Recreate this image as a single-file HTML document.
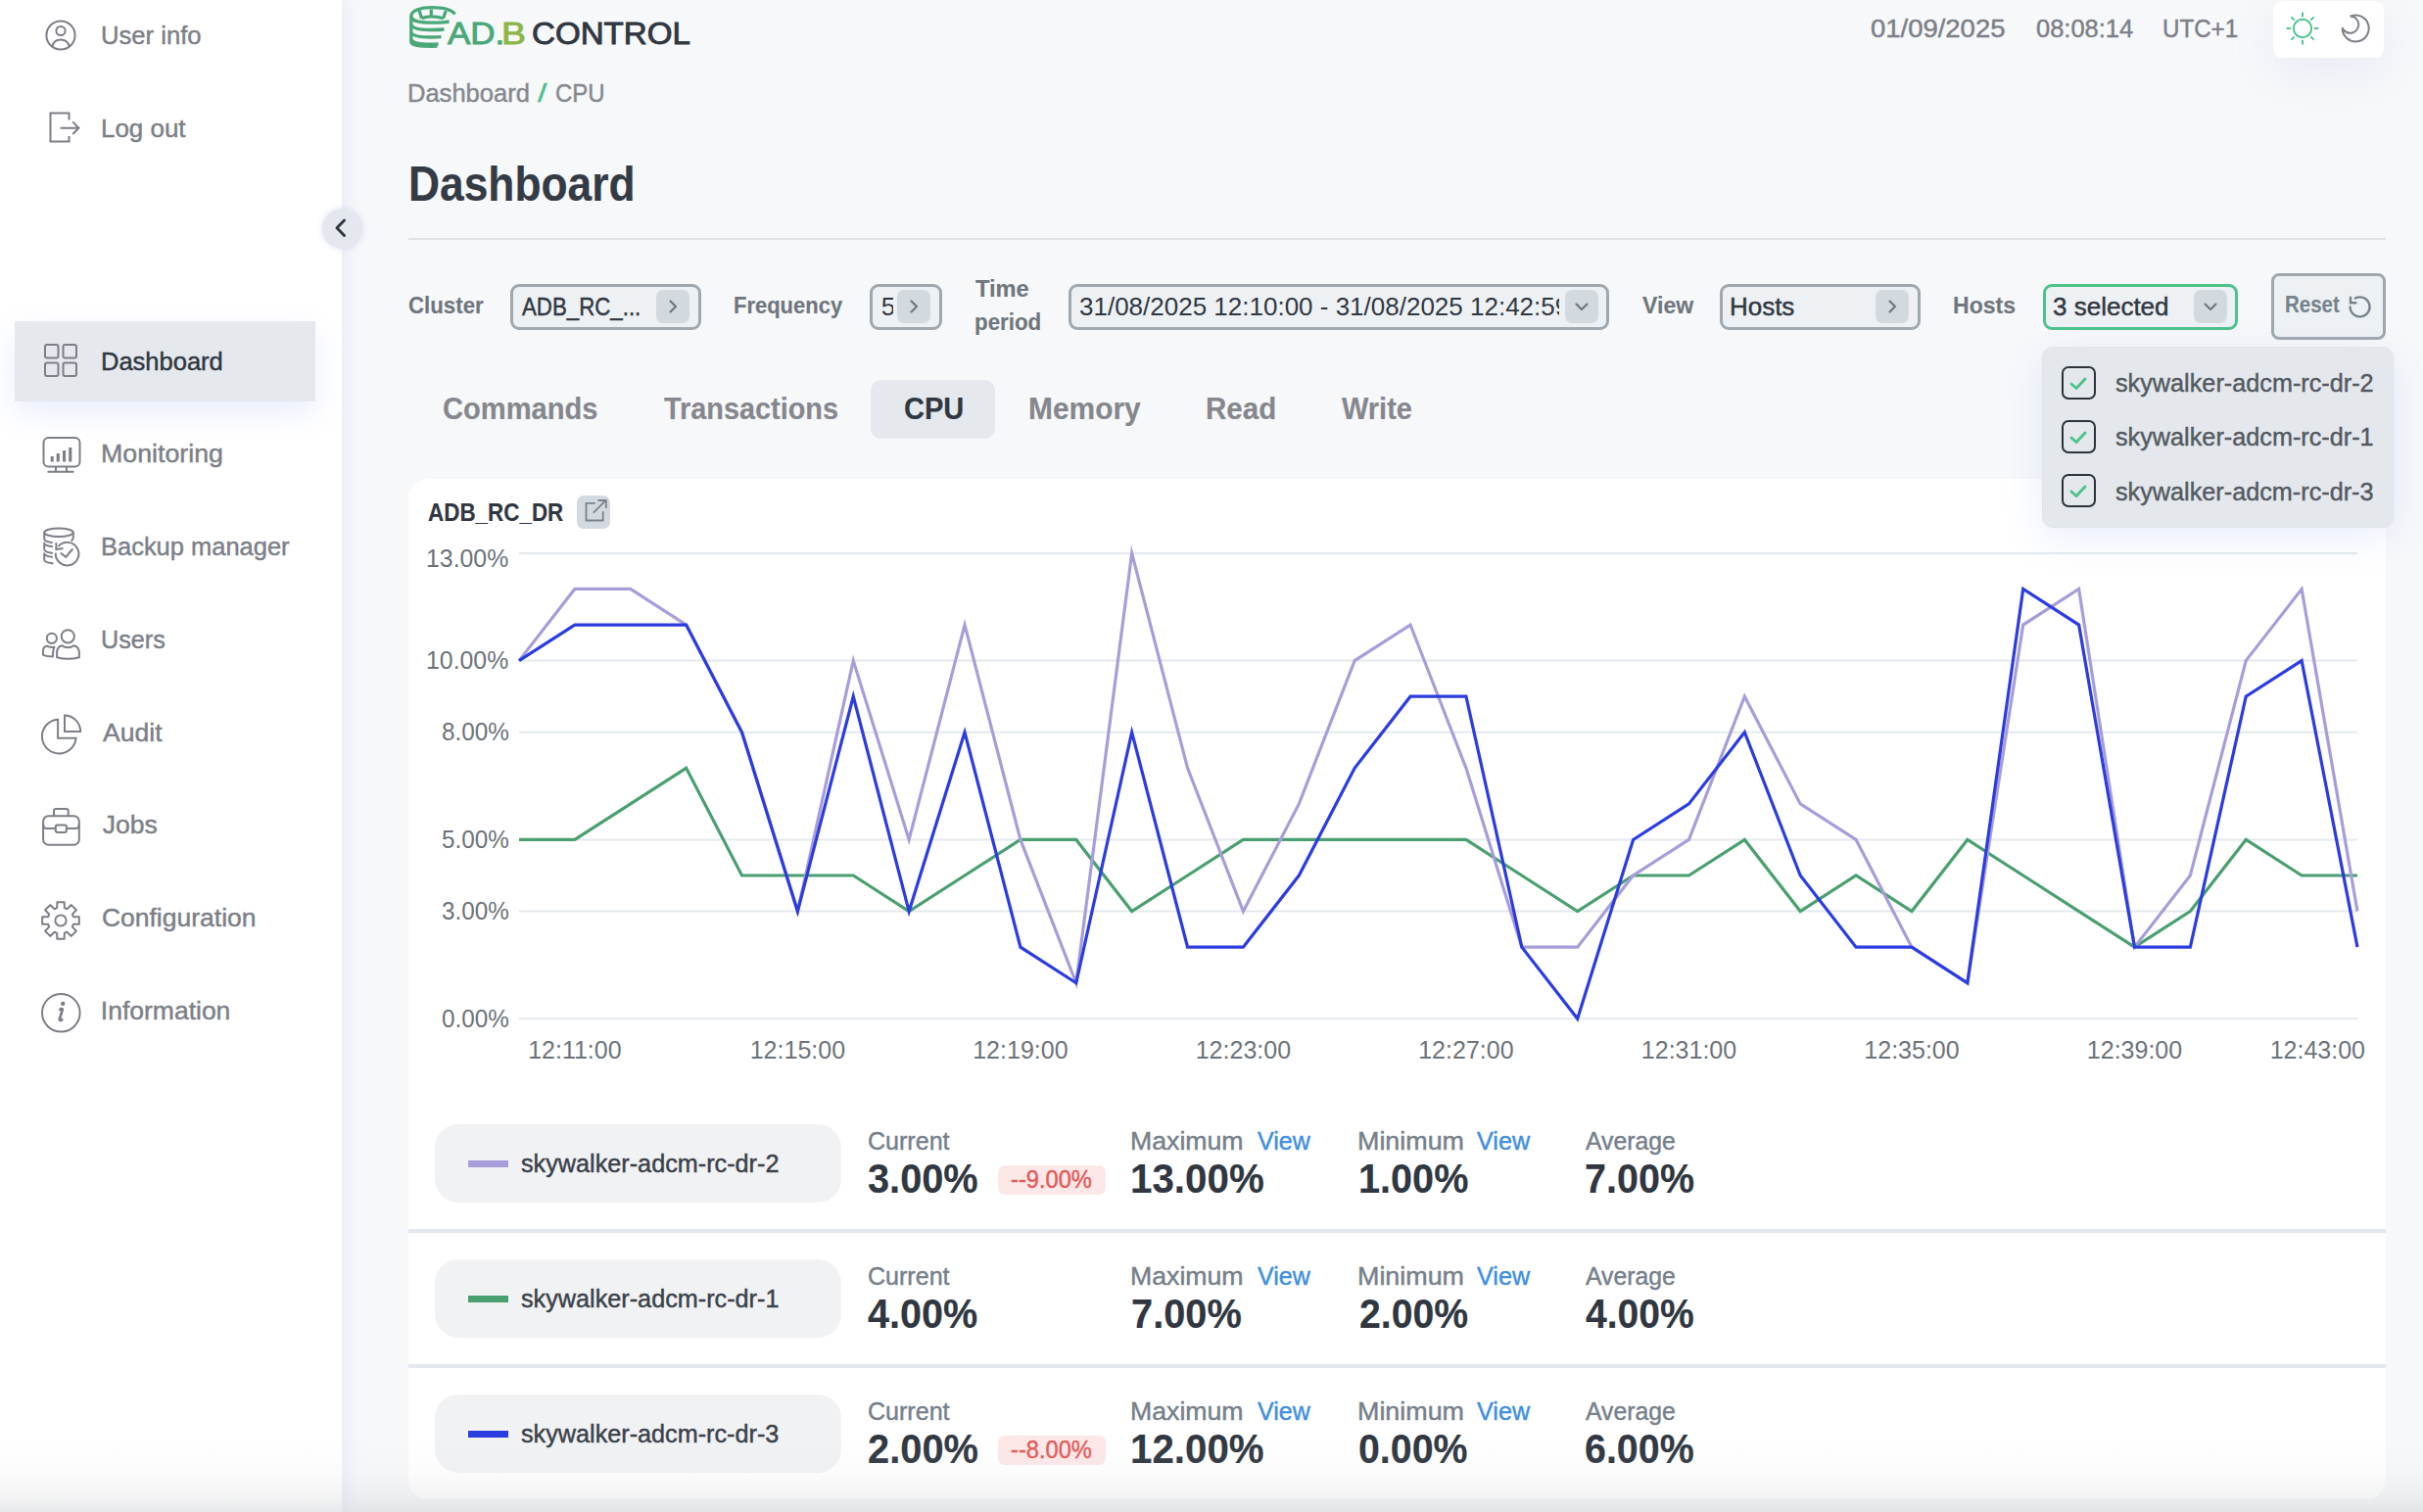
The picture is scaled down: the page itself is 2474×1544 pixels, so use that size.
<!DOCTYPE html>
<html><head><meta charset="utf-8"><title>ADB Control - Dashboard</title>
<style>
html,body{margin:0;padding:0;}
body{width:2474px;height:1544px;overflow:hidden;position:relative;background:#f7f8fa;font-family:"Liberation Sans", sans-serif;}
.t{position:absolute;line-height:1;white-space:nowrap;font-family:"Liberation Sans", sans-serif;}
.r{position:absolute;}
</style></head><body>
<div class="r" style="left:0.0px;top:0.0px;width:349.0px;height:1544.0px;background:#ffffff;box-shadow:4px 0 18px rgba(90,140,210,0.10);"></div>
<div class="r" style="left:15.0px;top:328.0px;width:307.0px;height:81.5px;background:#e5e9ee;box-shadow:0 12px 30px rgba(120,150,230,0.16);"></div>
<div class="t " style="left:103.3px;top:22.5px;font-size:26.5px;color:#7c7f87;font-weight:400;transform:scaleX(0.9679);transform-origin:0 0;-webkit-text-stroke:0.45px #7c7f87;">User info</div>
<div class="t " style="left:103.0px;top:117.6px;font-size:26.5px;color:#7c7f87;font-weight:400;transform:scaleX(0.9791);transform-origin:0 0;-webkit-text-stroke:0.45px #7c7f87;">Log out</div>
<div class="t " style="left:103.1px;top:356.2px;font-size:26.5px;color:#303741;font-weight:400;transform:scaleX(0.9626);transform-origin:0 0;-webkit-text-stroke:0.45px #303741;">Dashboard</div>
<div class="t " style="left:103.0px;top:450.4px;font-size:26.5px;color:#7c7f87;font-weight:400;transform:scaleX(1.0100);transform-origin:0 0;-webkit-text-stroke:0.45px #7c7f87;">Monitoring</div>
<div class="t " style="left:103.1px;top:545.1px;font-size:26.5px;color:#7c7f87;font-weight:400;transform:scaleX(0.9611);transform-origin:0 0;-webkit-text-stroke:0.45px #7c7f87;">Backup manager</div>
<div class="t " style="left:103.3px;top:639.9px;font-size:26.5px;color:#7c7f87;font-weight:400;transform:scaleX(0.9502);transform-origin:0 0;-webkit-text-stroke:0.45px #7c7f87;">Users</div>
<div class="t " style="left:105.1px;top:734.6px;font-size:26.5px;color:#7c7f87;font-weight:400;-webkit-text-stroke:0.45px #7c7f87;">Audit</div>
<div class="t " style="left:104.8px;top:829.3px;font-size:26.5px;color:#7c7f87;font-weight:400;-webkit-text-stroke:0.45px #7c7f87;">Jobs</div>
<div class="t " style="left:103.9px;top:924.0px;font-size:26.5px;color:#7c7f87;font-weight:400;-webkit-text-stroke:0.45px #7c7f87;">Configuration</div>
<div class="t " style="left:102.8px;top:1018.7px;font-size:26.5px;color:#7c7f87;font-weight:400;-webkit-text-stroke:0.45px #7c7f87;">Information</div>
<svg class="r" style="left:46px;top:20px;" width="32" height="32" viewBox="0 0 32 32"><g fill="none" stroke="#7c7f87" stroke-width="2"><circle cx="16" cy="16" r="14.6"/><circle cx="16" cy="11.5" r="4.6"/><path d="M7.2 27.6 C8.5 22.5 12 20.5 16 20.5 C20 20.5 23.5 22.5 24.8 27.6"/></g></svg>
<svg class="r" style="left:50px;top:114px;" width="33" height="33" viewBox="0 0 33 33"><g fill="none" stroke="#7c7f87" stroke-width="2"><path d="M20.5 8.5 V1.5 H1.5 V30.5 H20.5 V25"/><path d="M11.5 16.7 H30.5 M24.2 10.4 L30.5 16.7 L24.2 23"/></g></svg>
<svg class="r" style="left:45px;top:351px;" width="35" height="35" viewBox="0 0 35 35"><g fill="none" stroke="#7c7f87" stroke-width="2"><rect x="1" y="1" width="13.5" height="13.5" rx="2"/><rect x="19.5" y="1" width="13.5" height="13.5" rx="2"/><rect x="1" y="19.5" width="13.5" height="13.5" rx="2"/><rect x="19.5" y="19.5" width="13.5" height="13.5" rx="2"/></g></svg>
<svg class="r" style="left:43px;top:445px;" width="40" height="39" viewBox="0 0 40 39"><g fill="none" stroke="#7c7f87" stroke-width="2"><rect x="1.5" y="2" width="37" height="29.5" rx="5"/><path d="M14 31.5 V36.8 M25 31.5 V36.8 M5.5 36.8 H32.5"/></g><g fill="#7c7f87"><rect x="8.7" y="21" width="3.1" height="5.5"/><rect x="14.7" y="18" width="3.1" height="8.5"/><rect x="21" y="15" width="3.1" height="11.5"/><rect x="27.2" y="12" width="3.1" height="14.5"/></g></svg>
<svg class="r" style="left:42px;top:538px;" width="42" height="42" viewBox="0 0 42 42"><g fill="none" stroke="#7c7f87" stroke-width="2" stroke-width="1.95" stroke-linecap="round"><ellipse cx="18" cy="5.7" rx="14.8" ry="4.2"/><path d="M32.8 6 V11 C32.8 12.5 32 13.5 31.2 14"/><path d="M3.2 6 V12.3 C3.2 14 6 15.3 10.8 16"/><path d="M3.9 17.9 C5 18.8 8 19.6 11.1 20.1 M3.2 16.6 V23 C3.2 24.8 6 26 11.1 26.7"/><path d="M3.9 28.4 C5 29.3 8 30.2 11.1 30.8 M3.2 27.2 V33.5 C3.2 35.3 6 36.6 11.6 37.3"/><path d="M14.8 27.5 A11.8 11.8 0 1 0 18.2 19.3"/><path d="M15.4 16.2 V23 L22.4 22" stroke-linejoin="miter" stroke-linecap="butt"/><path d="M20.4 27 L25.2 30.9 L31.8 23"/></g></svg>
<svg class="r" style="left:42px;top:641px;" width="42" height="35" viewBox="0 0 42 35"><g fill="none" stroke="#7c7f87" stroke-width="2" stroke-width="1.9" stroke-linejoin="round"><circle cx="10.84" cy="10.86" r="5.1"/><circle cx="27.3" cy="8.8" r="6.6"/><path d="M5.6 18.7 C8 19.8 10.5 20.2 13.5 19.7 C12.2 22.5 11.9 26 11.9 29.6 C8 29.6 4.5 29 2 27.9 V23.5 C2 21 3.5 19.2 5.6 18.7 Z"/><path d="M21.3 18.3 C23 19.6 25 20.3 27.3 20.3 C29.6 20.3 31.6 19.6 33.4 18.3 C36.5 19 38.9 21.5 38.9 26 V30.2 C35.5 31.2 31.5 31.8 27.3 31.8 C23 31.8 19.5 31.2 16.1 30.2 V26 C16.1 21.5 18.2 19 21.3 18.3 Z"/></g></svg>
<svg class="r" style="left:42px;top:729px;" width="44" height="44" viewBox="0 0 44 44"><g fill="none" stroke="#7c7f87" stroke-width="2"><path d="M17.1 5.7 A17.4 17.4 0 1 0 35.6 24.8 H17.1 Z"/><path d="M24 1.5 A16.4 16.4 0 0 1 40.1 17.9 H24 Z"/></g></svg>
<svg class="r" style="left:42px;top:824px;" width="42" height="42" viewBox="0 0 42 42"><g fill="none" stroke="#7c7f87" stroke-width="2" stroke-width="1.85"><rect x="2.1" y="9.2" width="36.7" height="29.5" rx="5.5"/><path d="M13 9.2 V4 Q13 1.95 15 1.95 H25.7 Q27.7 1.95 27.7 4 V9.2"/><path d="M2.1 17.5 C2.1 20.5 3.5 22.1 6 22.1 H14.8 M25.9 22.1 H34.9 C37.4 22.1 38.8 20.5 38.8 17.5"/><rect x="14.8" y="18.5" width="11.1" height="7.4" rx="1.8"/></g></svg>
<svg class="r" style="left:41px;top:919px;" width="42" height="42" viewBox="0 0 42 42"><g fill="none" stroke="#7c7f87" stroke-width="2" stroke-width="1.9"><path d="M17.37 2.15 L24.63 2.15 L24.83 8.16 L27.37 9.21 L31.77 5.10 L36.90 10.23 L32.79 14.63 L33.84 17.17 L39.85 17.37 L39.85 24.63 L33.84 24.83 L32.79 27.37 L36.90 31.77 L31.77 36.90 L27.37 32.79 L24.83 33.84 L24.63 39.85 L17.37 39.85 L17.17 33.84 L14.63 32.79 L10.23 36.90 L5.10 31.77 L9.21 27.37 L8.16 24.83 L2.15 24.63 L2.15 17.37 L8.16 17.17 L9.21 14.63 L5.10 10.23 L10.23 5.10 L14.63 9.21 L17.17 8.16 Z" stroke-linejoin="round"/><circle cx="21" cy="21" r="5.6"/></g></svg>
<svg class="r" style="left:41px;top:1014px;" width="42" height="42" viewBox="0 0 42 42"><g fill="none" stroke="#7c7f87" stroke-width="2" stroke-width="1.75"><circle cx="21.3" cy="20.3" r="19.3"/></g><circle cx="23.2" cy="10.9" r="2.2" fill="#7c7f87"/><path d="M20.3 17 C21.3 16 23 15.6 22.8 17.2 L19.8 26.6 C19.4 28.2 20.6 28.6 22.2 27.2" fill="none" stroke="#7c7f87" stroke-width="2.7" stroke-linecap="round" stroke-linejoin="round"/></svg>
<div class="r" style="left:329.0px;top:213.0px;width:41.0px;height:41.0px;border-radius:50%;background:#e4e8ee;box-shadow:0 0 6px rgba(130,140,220,0.25);"></div>
<svg class="r" style="left:338px;top:222px;" width="22" height="22" viewBox="0 0 22 22"><path d="M13.5 3 L6 10.8 L13.5 18.5" fill="none" stroke="#303741" stroke-width="3" stroke-linecap="round" stroke-linejoin="round"/></svg>
<svg class="r" style="left:417px;top:5px;" width="50" height="45" viewBox="0 0 50 45"><g fill="none" stroke="#4aa878" stroke-width="3.3" stroke-linecap="butt" stroke-linejoin="round"><path d="M47.5 9.5 C44 4.5 35 2.7 24 2.7 C12 2.7 2.8 6 2.8 11.5 V38 C2.8 41 10 42.6 29.5 42.2"/><path d="M2.8 12 C4 17 12 18.2 24 18.2 C32 18.2 38 17.8 41.6 16.8"/><path d="M2.8 20 C4 24 12 25.5 22 25.5 C29 25.5 33 25.3 36.5 25"/><path d="M2.8 28 C4 31.5 12 33 22 33 C27 33 31 32.8 33.5 32.6"/><path d="M2.8 35 C4 38.5 12 40.2 22 40.2 C26 40.2 28.5 40.1 30.5 40"/><path d="M10.9 5.2 L13.6 13.8 M23.3 4.5 V12 M38.2 6 L35.6 13.8 M13.6 13.8 C17 12.3 20 11.9 23.3 11.9 C27 11.9 32 12.5 35.6 13.8"/></g></svg>
<div class="t " style="left:456.9px;top:18.6px;font-size:31px;color:#4aa878;font-weight:400;transform:scaleX(1.1270);transform-origin:0 0;-webkit-text-stroke:0.9px #4aa878;">AD.</div>
<div class="t " style="left:512.0px;top:18.6px;font-size:31px;color:#8db547;font-weight:400;transform:scaleX(1.2048);transform-origin:0 0;-webkit-text-stroke:0.9px #8db547;">B</div>
<div class="t " style="left:543.3px;top:18.6px;font-size:31px;color:#303741;font-weight:400;transform:scaleX(1.0678);transform-origin:0 0;-webkit-text-stroke:0.9px #303741;">CONTROL</div>
<div class="t " style="left:1909.6px;top:16.1px;font-size:26px;color:#7c7f87;font-weight:400;transform:scaleX(1.0562);transform-origin:0 0;-webkit-text-stroke:0.45px #7c7f87;">01/09/2025</div>
<div class="t " style="left:2079.4px;top:16.1px;font-size:26px;color:#7c7f87;font-weight:400;transform:scaleX(0.9789);transform-origin:0 0;-webkit-text-stroke:0.45px #7c7f87;">08:08:14</div>
<div class="t " style="left:2208.1px;top:16.1px;font-size:26px;color:#7c7f87;font-weight:400;transform:scaleX(0.9273);transform-origin:0 0;-webkit-text-stroke:0.45px #7c7f87;">UTC+1</div>
<div class="r" style="left:2321.0px;top:0.5px;width:113.0px;height:58.3px;background:#ffffff;border-radius:9px;box-shadow:0 14px 50px rgba(140,165,220,0.16);"></div>
<svg class="r" style="left:2331px;top:9px;" width="40" height="40" viewBox="0 0 40 40"><g stroke="#4cc38a" stroke-width="1.9" fill="none"><circle cx="20" cy="20" r="9.2"/><path d="M31.80 20.00 L36.40 20.00"/><path d="M28.34 28.34 L31.60 31.60"/><path d="M20.00 31.80 L20.00 36.40"/><path d="M11.66 28.34 L8.40 31.60"/><path d="M8.20 20.00 L3.60 20.00"/><path d="M11.66 11.66 L8.40 8.40"/><path d="M20.00 8.20 L20.00 3.60"/><path d="M28.34 11.66 L31.60 8.40"/></g></svg>
<svg class="r" style="left:2384px;top:9px;" width="40" height="40" viewBox="0 0 40 40"><path d="M16.2 7.4 A13.5 13.5 0 1 1 7.7 19.8 A8.7 8.7 0 1 0 16.2 7.4 Z" fill="none" stroke="#7c7f87" stroke-width="2" stroke-linejoin="round"/></svg>
<div class="t " style="left:416.1px;top:82.2px;font-size:26px;color:#85888f;font-weight:400;transform:scaleX(0.9814);transform-origin:0 0;-webkit-text-stroke:0.45px #85888f;">Dashboard</div>
<div class="t " style="left:548.5px;top:82.2px;font-size:26px;color:#4cc38a;font-weight:400;transform:scaleX(1.3000);transform-origin:0 0;-webkit-text-stroke:0.45px #4cc38a;">/</div>
<div class="t " style="left:567.3px;top:82.2px;font-size:26px;color:#85888f;font-weight:400;transform:scaleX(0.9205);transform-origin:0 0;-webkit-text-stroke:0.45px #85888f;">CPU</div>
<div class="t " style="left:416.7px;top:163.1px;font-size:50px;color:#343b45;font-weight:700;transform:scaleX(0.8869);transform-origin:0 0;-webkit-text-stroke:0.15px #343b45;">Dashboard</div>
<div class="r" style="left:417.0px;top:243.0px;width:2019.0px;height:2.0px;background:#dfe2e6;"></div>
<div class="t " style="left:416.6px;top:300.4px;font-size:24px;color:#6f767d;font-weight:700;transform:scaleX(0.9275);transform-origin:0 0;-webkit-text-stroke:0.15px #6f767d;">Cluster</div>
<div class="r" style="left:521.0px;top:290.0px;width:195.0px;height:47.0px;background:#eef1f4;border:3px solid #9ea8ae;border-radius:9px;box-sizing:border-box;"></div>
<div class="t " style="left:532.5px;top:300.4px;font-size:26px;color:#303741;font-weight:400;transform:scaleX(0.8563);transform-origin:0 0;-webkit-text-stroke:0.45px #303741;">ADB_RC_...</div>
<div class="r" style="left:670.0px;top:296.0px;width:34.0px;height:34.0px;background:#d3dadf;border-radius:7px;"></div>
<svg class="r" style="left:670px;top:296px;" width="34" height="34" viewBox="0 0 34 34"><path d="M14.5 11.5 L20 17 L14.5 22.5" fill="none" stroke="#6f767d" stroke-width="2.2" stroke-linecap="round" stroke-linejoin="round"/></svg>
<div class="t " style="left:748.5px;top:300.4px;font-size:24px;color:#6f767d;font-weight:700;transform:scaleX(0.9156);transform-origin:0 0;-webkit-text-stroke:0.15px #6f767d;">Frequency</div>
<div class="r" style="left:888.0px;top:290.0px;width:74.0px;height:47.0px;background:#eef1f4;border:3px solid #9ea8ae;border-radius:9px;box-sizing:border-box;"></div>
<div class="r" style="left:899.8px;top:295px;width:12.200000000000045px;height:40px;overflow:hidden;"><div class="t" style="left:0;top:5.4px;font-size:26px;color:#303741;">5</div></div>
<div class="r" style="left:916.0px;top:296.0px;width:34.0px;height:34.0px;background:#d3dadf;border-radius:7px;"></div>
<svg class="r" style="left:916px;top:296px;" width="34" height="34" viewBox="0 0 34 34"><path d="M14.5 11.5 L20 17 L14.5 22.5" fill="none" stroke="#6f767d" stroke-width="2.2" stroke-linecap="round" stroke-linejoin="round"/></svg>
<div class="t " style="left:995.5px;top:282.6px;font-size:24px;color:#6f767d;font-weight:700;transform:scaleX(0.9835);transform-origin:0 0;-webkit-text-stroke:0.15px #6f767d;">Time</div>
<div class="t " style="left:995.2px;top:316.7px;font-size:24px;color:#6f767d;font-weight:700;transform:scaleX(0.9302);transform-origin:0 0;-webkit-text-stroke:0.15px #6f767d;">period</div>
<div class="r" style="left:1091.0px;top:290.0px;width:552.0px;height:47.0px;background:#eef1f4;border:3px solid #9ea8ae;border-radius:9px;box-sizing:border-box;"></div>
<div class="r" style="left:1102px;top:295px;width:490px;height:40px;overflow:hidden;"><div class="t" style="left:0;top:5.4px;font-size:26px;color:#303741;">31/08/2025 12:10:00 - 31/08/2025 12:42:59</div></div>
<div class="r" style="left:1598.0px;top:296.0px;width:34.0px;height:34.0px;background:#d3dadf;border-radius:7px;"></div>
<svg class="r" style="left:1598px;top:296px;" width="34" height="34" viewBox="0 0 34 34"><path d="M11.5 14.5 L17 20 L22.5 14.5" fill="none" stroke="#6f767d" stroke-width="2.2" stroke-linecap="round" stroke-linejoin="round"/></svg>
<div class="t " style="left:1676.8px;top:300.4px;font-size:24px;color:#6f767d;font-weight:700;transform:scaleX(0.9612);transform-origin:0 0;-webkit-text-stroke:0.15px #6f767d;">View</div>
<div class="r" style="left:1756.0px;top:290.0px;width:204.5px;height:47.0px;background:#eef1f4;border:3px solid #9ea8ae;border-radius:9px;box-sizing:border-box;"></div>
<div class="t " style="left:1765.9px;top:300.4px;font-size:26px;color:#303741;font-weight:400;-webkit-text-stroke:0.45px #303741;">Hosts</div>
<div class="r" style="left:1915.0px;top:296.0px;width:34.0px;height:34.0px;background:#d3dadf;border-radius:7px;"></div>
<svg class="r" style="left:1915px;top:296px;" width="34" height="34" viewBox="0 0 34 34"><path d="M14.5 11.5 L20 17 L14.5 22.5" fill="none" stroke="#6f767d" stroke-width="2.2" stroke-linecap="round" stroke-linejoin="round"/></svg>
<div class="t " style="left:1994.0px;top:300.4px;font-size:24px;color:#6f767d;font-weight:700;transform:scaleX(0.9594);transform-origin:0 0;-webkit-text-stroke:0.15px #6f767d;">Hosts</div>
<div class="r" style="left:2085.7px;top:290.0px;width:198.9px;height:47.0px;background:#eef1f4;border:3px solid #4cc38a;border-radius:9px;box-sizing:border-box;"></div>
<div class="t " style="left:2096.0px;top:300.4px;font-size:26px;color:#303741;font-weight:400;-webkit-text-stroke:0.45px #303741;">3 selected</div>
<div class="r" style="left:2240.0px;top:296.0px;width:34.0px;height:34.0px;background:#d3dadf;border-radius:7px;"></div>
<svg class="r" style="left:2240px;top:296px;" width="34" height="34" viewBox="0 0 34 34"><path d="M11.5 14.5 L17 20 L22.5 14.5" fill="none" stroke="#6f767d" stroke-width="2.2" stroke-linecap="round" stroke-linejoin="round"/></svg>
<div class="r" style="left:2319.2px;top:278.9px;width:116.7px;height:67.9px;background:#eef1f4;border:3px solid #9ea8ae;border-radius:8px;box-sizing:border-box;"></div>
<div class="t " style="left:2332.7px;top:300.4px;font-size:23px;color:#76828b;font-weight:700;transform:scaleX(0.8900);transform-origin:0 0;-webkit-text-stroke:0.15px #76828b;">Reset</div>
<svg class="r" style="left:2396px;top:300px;" width="28" height="28" viewBox="0 0 28 28"><path d="M3.6 13.5 A10 10 0 1 0 8.8 4.6" fill="none" stroke="#76828b" stroke-width="2.3" stroke-linecap="round"/><path d="M4 3.8 V9.3 H9.4" fill="none" stroke="#76828b" stroke-width="2.4" stroke-linecap="round" stroke-linejoin="miter"/></svg>
<div class="r" style="left:889.3px;top:388.4px;width:126.3px;height:59.2px;background:#e5e9ee;border-radius:11px;"></div>
<div class="t " style="left:451.6px;top:402.3px;font-size:31.5px;color:#85878d;font-weight:700;transform:scaleX(0.9236);transform-origin:0 0;-webkit-text-stroke:0.15px #85878d;">Commands</div>
<div class="t " style="left:677.9px;top:402.3px;font-size:31.5px;color:#85878d;font-weight:700;transform:scaleX(0.9159);transform-origin:0 0;-webkit-text-stroke:0.15px #85878d;">Transactions</div>
<div class="t " style="left:922.6px;top:402.3px;font-size:31.5px;color:#303741;font-weight:700;transform:scaleX(0.9226);transform-origin:0 0;-webkit-text-stroke:0.15px #303741;">CPU</div>
<div class="t " style="left:1049.8px;top:402.3px;font-size:31.5px;color:#85878d;font-weight:700;transform:scaleX(0.9502);transform-origin:0 0;-webkit-text-stroke:0.15px #85878d;">Memory</div>
<div class="t " style="left:1230.8px;top:402.3px;font-size:31.5px;color:#85878d;font-weight:700;transform:scaleX(0.9383);transform-origin:0 0;-webkit-text-stroke:0.15px #85878d;">Read</div>
<div class="t " style="left:1370.2px;top:402.3px;font-size:31.5px;color:#85878d;font-weight:700;transform:scaleX(0.9197);transform-origin:0 0;-webkit-text-stroke:0.15px #85878d;">Write</div>
<div class="r" style="left:417.0px;top:489.3px;width:2019.0px;height:1041.7px;background:#ffffff;border-radius:20px;"></div>
<div class="t " style="left:437.3px;top:511.0px;font-size:25px;color:#303741;font-weight:700;transform:scaleX(0.8967);transform-origin:0 0;-webkit-text-stroke:0.15px #303741;">ADB_RC_DR</div>
<div class="r" style="left:589.2px;top:506.4px;width:33.7px;height:33.4px;background:#d3dadf;border-radius:7px;"></div>
<svg class="r" style="left:589px;top:506px;" width="34" height="34" viewBox="0 0 34 34"><g fill="none" stroke="#76838c" stroke-width="1.8" stroke-linecap="round"><path d="M18.8 7.8 H9.5 V25.5 H26.7 V16.2" stroke-linecap="butt" stroke-linejoin="round"/><path d="M17.3 17.2 L29.4 5.2"/><path d="M21.6 5 H29.8 V13" stroke-linecap="butt"/></g></svg>
<svg class="r" style="left:0;top:0" width="2474" height="1544"><line x1="530.0" y1="564.90" x2="2407" y2="564.90" stroke="#e3e9ee" stroke-width="2"/><line x1="530.0" y1="674.61" x2="2407" y2="674.61" stroke="#e3e9ee" stroke-width="2"/><line x1="530.0" y1="747.75" x2="2407" y2="747.75" stroke="#e3e9ee" stroke-width="2"/><line x1="530.0" y1="857.45" x2="2407" y2="857.45" stroke="#e3e9ee" stroke-width="2"/><line x1="530.0" y1="930.59" x2="2407" y2="930.59" stroke="#e3e9ee" stroke-width="2"/><line x1="530.0" y1="1040.30" x2="2407" y2="1040.30" stroke="#e3e9ee" stroke-width="2"/><polyline points="530.00,857.45 586.88,857.45 643.76,820.88 700.64,784.32 757.52,894.02 814.39,894.02 871.27,894.02 928.15,930.59 985.03,894.02 1041.91,857.45 1098.79,857.45 1155.67,930.59 1212.55,894.02 1269.42,857.45 1326.30,857.45 1383.18,857.45 1440.06,857.45 1496.94,857.45 1553.82,894.02 1610.70,930.59 1667.58,894.02 1724.45,894.02 1781.33,857.45 1838.21,930.59 1895.09,894.02 1951.97,930.59 2008.85,857.45 2065.73,894.02 2122.61,930.59 2179.48,967.16 2236.36,930.59 2293.24,857.45 2350.12,894.02 2407.00,894.02" fill="none" stroke="#4a9f70" stroke-width="3.2" stroke-linejoin="miter" stroke-miterlimit="10"/><polyline points="530.00,674.61 586.88,601.47 643.76,601.47 700.64,638.04 757.52,747.75 814.39,930.59 871.27,674.61 928.15,857.45 985.03,638.04 1041.91,857.45 1098.79,1003.73 1155.67,564.90 1212.55,784.32 1269.42,930.59 1326.30,820.88 1383.18,674.61 1440.06,638.04 1496.94,784.32 1553.82,967.16 1610.70,967.16 1667.58,894.02 1724.45,857.45 1781.33,711.18 1838.21,820.88 1895.09,857.45 1951.97,967.16 2008.85,1003.73 2065.73,638.04 2122.61,601.47 2179.48,967.16 2236.36,894.02 2293.24,674.61 2350.12,601.47 2407.00,930.59" fill="none" stroke="#a79ed9" stroke-width="3.2" stroke-linejoin="miter" stroke-miterlimit="10"/><polyline points="530.00,674.61 586.88,638.04 643.76,638.04 700.64,638.04 757.52,747.75 814.39,930.59 871.27,711.18 928.15,930.59 985.03,747.75 1041.91,967.16 1098.79,1003.73 1155.67,747.75 1212.55,967.16 1269.42,967.16 1326.30,894.02 1383.18,784.32 1440.06,711.18 1496.94,711.18 1553.82,967.16 1610.70,1040.30 1667.58,857.45 1724.45,820.88 1781.33,747.75 1838.21,894.02 1895.09,967.16 1951.97,967.16 2008.85,1003.73 2065.73,601.47 2122.61,638.04 2179.48,967.16 2236.36,967.16 2293.24,711.18 2350.12,674.61 2407.00,967.16" fill="none" stroke="#2b3ce0" stroke-width="3.2" stroke-linejoin="miter" stroke-miterlimit="10"/></svg>
<div class="t" style="left:435.2px;top:558.2px;font-size:25px;color:#6d7379;transform:scaleX(0.9939);transform-origin:0 0;">13.00%</div>
<div class="t" style="left:435.2px;top:662.1px;font-size:25px;color:#6d7379;transform:scaleX(0.9939);transform-origin:0 0;">10.00%</div>
<div class="t" style="left:450.5px;top:735.3px;font-size:25px;color:#6d7379;transform:scaleX(0.9724);transform-origin:0 0;">8.00%</div>
<div class="t" style="left:450.6px;top:845.0px;font-size:25px;color:#6d7379;transform:scaleX(0.9710);transform-origin:0 0;">5.00%</div>
<div class="t" style="left:450.6px;top:918.1px;font-size:25px;color:#6d7379;transform:scaleX(0.9710);transform-origin:0 0;">3.00%</div>
<div class="t" style="left:450.6px;top:1027.8px;font-size:25px;color:#6d7379;transform:scaleX(0.9710);transform-origin:0 0;">0.00%</div>
<div class="t" style="left:486.9px;width:200px;text-align:center;top:1060.3px;font-size:25px;color:#6d7379;">12:11:00</div>
<div class="t" style="left:714.4px;width:200px;text-align:center;top:1060.3px;font-size:25px;color:#6d7379;">12:15:00</div>
<div class="t" style="left:941.9px;width:200px;text-align:center;top:1060.3px;font-size:25px;color:#6d7379;">12:19:00</div>
<div class="t" style="left:1169.4px;width:200px;text-align:center;top:1060.3px;font-size:25px;color:#6d7379;">12:23:00</div>
<div class="t" style="left:1396.9px;width:200px;text-align:center;top:1060.3px;font-size:25px;color:#6d7379;">12:27:00</div>
<div class="t" style="left:1624.5px;width:200px;text-align:center;top:1060.3px;font-size:25px;color:#6d7379;">12:31:00</div>
<div class="t" style="left:1852.0px;width:200px;text-align:center;top:1060.3px;font-size:25px;color:#6d7379;">12:35:00</div>
<div class="t" style="left:2079.5px;width:200px;text-align:center;top:1060.3px;font-size:25px;color:#6d7379;">12:39:00</div>
<div class="t" style="left:2215px;width:200px;text-align:right;top:1060.3px;font-size:25px;color:#6d7379;">12:43:00</div>
<div class="r" style="left:444.0px;top:1148.0px;width:415.0px;height:80.0px;background:#f1f2f4;border-radius:24px;"></div>
<div class="r" style="left:478.0px;top:1185.0px;width:41.0px;height:7.0px;background:#a79ed9;"></div>
<div class="t " style="left:532.3px;top:1175.0px;font-size:26px;color:#3a4149;font-weight:400;transform:scaleX(0.9700);transform-origin:0 0;-webkit-text-stroke:0.45px #3a4149;">skywalker-adcm-rc-dr-2</div>
<div class="t " style="left:885.7px;top:1152.1px;font-size:26px;color:#76808a;font-weight:400;transform:scaleX(0.9636);transform-origin:0 0;-webkit-text-stroke:0.45px #76808a;">Current</div>
<div class="t " style="left:886.1px;top:1182.9px;font-size:42px;color:#303741;font-weight:700;transform:scaleX(0.9461);transform-origin:0 0;-webkit-text-stroke:0.15px #303741;">3.00%</div>
<div class="r" style="left:1019.0px;top:1190.0px;width:109.6px;height:29.7px;background:#fde8e8;border-radius:7px;"></div>
<div class="t " style="left:1031.9px;top:1192.4px;font-size:25.5px;color:#e15b5b;font-weight:400;transform:scaleX(0.9278);transform-origin:0 0;-webkit-text-stroke:0.45px #e15b5b;">--9.00%</div>
<div class="t " style="left:1154.1px;top:1151.7px;font-size:26px;color:#76808a;font-weight:400;transform:scaleX(1.0257);transform-origin:0 0;-webkit-text-stroke:0.45px #76808a;">Maximum</div>
<div class="t " style="left:1283.7px;top:1151.7px;font-size:26px;color:#3f8fe0;font-weight:400;transform:scaleX(0.9624);transform-origin:0 0;-webkit-text-stroke:0.45px #3f8fe0;">View</div>
<div class="t " style="left:1153.8px;top:1182.9px;font-size:42px;color:#303741;font-weight:700;transform:scaleX(0.9603);transform-origin:0 0;-webkit-text-stroke:0.15px #303741;">13.00%</div>
<div class="t " style="left:1386.2px;top:1151.7px;font-size:26px;color:#76808a;font-weight:400;transform:scaleX(1.0334);transform-origin:0 0;-webkit-text-stroke:0.45px #76808a;">Minimum</div>
<div class="t " style="left:1508.2px;top:1151.7px;font-size:26px;color:#3f8fe0;font-weight:400;transform:scaleX(0.9677);transform-origin:0 0;-webkit-text-stroke:0.45px #3f8fe0;">View</div>
<div class="t " style="left:1386.5px;top:1182.9px;font-size:42px;color:#303741;font-weight:700;transform:scaleX(0.9436);transform-origin:0 0;-webkit-text-stroke:0.15px #303741;">1.00%</div>
<div class="t " style="left:1619.1px;top:1151.7px;font-size:26px;color:#76808a;font-weight:400;transform:scaleX(0.9516);transform-origin:0 0;-webkit-text-stroke:0.45px #76808a;">Average</div>
<div class="t " style="left:1617.5px;top:1182.9px;font-size:42px;color:#303741;font-weight:700;transform:scaleX(0.9406);transform-origin:0 0;-webkit-text-stroke:0.15px #303741;">7.00%</div>
<div class="r" style="left:417.0px;top:1255.4px;width:2019.0px;height:3.3px;background:#e2e8ed;"></div>
<div class="r" style="left:444.0px;top:1286.0px;width:415.0px;height:80.0px;background:#f1f2f4;border-radius:24px;"></div>
<div class="r" style="left:478.0px;top:1323.0px;width:41.0px;height:7.0px;background:#4a9f70;"></div>
<div class="t " style="left:532.3px;top:1313.0px;font-size:26px;color:#3a4149;font-weight:400;transform:scaleX(0.9700);transform-origin:0 0;-webkit-text-stroke:0.45px #3a4149;">skywalker-adcm-rc-dr-1</div>
<div class="t " style="left:885.7px;top:1290.1px;font-size:26px;color:#76808a;font-weight:400;transform:scaleX(0.9636);transform-origin:0 0;-webkit-text-stroke:0.45px #76808a;">Current</div>
<div class="t " style="left:886.4px;top:1320.9px;font-size:42px;color:#303741;font-weight:700;transform:scaleX(0.9429);transform-origin:0 0;-webkit-text-stroke:0.15px #303741;">4.00%</div>
<div class="t " style="left:1154.1px;top:1289.7px;font-size:26px;color:#76808a;font-weight:400;transform:scaleX(1.0257);transform-origin:0 0;-webkit-text-stroke:0.45px #76808a;">Maximum</div>
<div class="t " style="left:1283.7px;top:1289.7px;font-size:26px;color:#3f8fe0;font-weight:400;transform:scaleX(0.9624);transform-origin:0 0;-webkit-text-stroke:0.45px #3f8fe0;">View</div>
<div class="t " style="left:1154.6px;top:1320.9px;font-size:42px;color:#303741;font-weight:700;transform:scaleX(0.9475);transform-origin:0 0;-webkit-text-stroke:0.15px #303741;">7.00%</div>
<div class="t " style="left:1386.2px;top:1289.7px;font-size:26px;color:#76808a;font-weight:400;transform:scaleX(1.0334);transform-origin:0 0;-webkit-text-stroke:0.45px #76808a;">Minimum</div>
<div class="t " style="left:1508.2px;top:1289.7px;font-size:26px;color:#3f8fe0;font-weight:400;transform:scaleX(0.9677);transform-origin:0 0;-webkit-text-stroke:0.45px #3f8fe0;">View</div>
<div class="t " style="left:1387.7px;top:1320.9px;font-size:42px;color:#303741;font-weight:700;transform:scaleX(0.9339);transform-origin:0 0;-webkit-text-stroke:0.15px #303741;">2.00%</div>
<div class="t " style="left:1619.1px;top:1289.7px;font-size:26px;color:#76808a;font-weight:400;transform:scaleX(0.9516);transform-origin:0 0;-webkit-text-stroke:0.45px #76808a;">Average</div>
<div class="t " style="left:1618.6px;top:1320.9px;font-size:42px;color:#303741;font-weight:700;transform:scaleX(0.9309);transform-origin:0 0;-webkit-text-stroke:0.15px #303741;">4.00%</div>
<div class="r" style="left:417.0px;top:1393.4px;width:2019.0px;height:3.3px;background:#e2e8ed;"></div>
<div class="r" style="left:444.0px;top:1424.0px;width:415.0px;height:80.0px;background:#f1f2f4;border-radius:24px;"></div>
<div class="r" style="left:478.0px;top:1461.0px;width:41.0px;height:7.0px;background:#2b3ce0;"></div>
<div class="t " style="left:532.3px;top:1451.0px;font-size:26px;color:#3a4149;font-weight:400;transform:scaleX(0.9696);transform-origin:0 0;-webkit-text-stroke:0.45px #3a4149;">skywalker-adcm-rc-dr-3</div>
<div class="t " style="left:885.7px;top:1428.1px;font-size:26px;color:#76808a;font-weight:400;transform:scaleX(0.9636);transform-origin:0 0;-webkit-text-stroke:0.45px #76808a;">Current</div>
<div class="t " style="left:885.7px;top:1458.9px;font-size:42px;color:#303741;font-weight:700;transform:scaleX(0.9494);transform-origin:0 0;-webkit-text-stroke:0.15px #303741;">2.00%</div>
<div class="r" style="left:1019.0px;top:1466.0px;width:109.6px;height:29.7px;background:#fde8e8;border-radius:7px;"></div>
<div class="t " style="left:1031.9px;top:1468.4px;font-size:25.5px;color:#e15b5b;font-weight:400;transform:scaleX(0.9278);transform-origin:0 0;-webkit-text-stroke:0.45px #e15b5b;">--8.00%</div>
<div class="t " style="left:1154.1px;top:1427.7px;font-size:26px;color:#76808a;font-weight:400;transform:scaleX(1.0257);transform-origin:0 0;-webkit-text-stroke:0.45px #76808a;">Maximum</div>
<div class="t " style="left:1283.7px;top:1427.7px;font-size:26px;color:#3f8fe0;font-weight:400;transform:scaleX(0.9624);transform-origin:0 0;-webkit-text-stroke:0.45px #3f8fe0;">View</div>
<div class="t " style="left:1153.8px;top:1458.9px;font-size:42px;color:#303741;font-weight:700;transform:scaleX(0.9589);transform-origin:0 0;-webkit-text-stroke:0.15px #303741;">12.00%</div>
<div class="t " style="left:1386.2px;top:1427.7px;font-size:26px;color:#76808a;font-weight:400;transform:scaleX(1.0334);transform-origin:0 0;-webkit-text-stroke:0.45px #76808a;">Minimum</div>
<div class="t " style="left:1508.2px;top:1427.7px;font-size:26px;color:#3f8fe0;font-weight:400;transform:scaleX(0.9677);transform-origin:0 0;-webkit-text-stroke:0.45px #3f8fe0;">View</div>
<div class="t " style="left:1387.4px;top:1458.9px;font-size:42px;color:#303741;font-weight:700;transform:scaleX(0.9363);transform-origin:0 0;-webkit-text-stroke:0.15px #303741;">0.00%</div>
<div class="t " style="left:1619.1px;top:1427.7px;font-size:26px;color:#76808a;font-weight:400;transform:scaleX(0.9516);transform-origin:0 0;-webkit-text-stroke:0.45px #76808a;">Average</div>
<div class="t " style="left:1617.8px;top:1458.9px;font-size:42px;color:#303741;font-weight:700;transform:scaleX(0.9381);transform-origin:0 0;-webkit-text-stroke:0.15px #303741;">6.00%</div>
<div class="r" style="left:2085.0px;top:354.3px;width:358.7px;height:184.3px;background:#e4e8ed;border:1px solid #dfe3ec;box-sizing:border-box;border-radius:11px;box-shadow:0 10px 40px rgba(120,150,235,0.16);"></div>
<div class="r" style="left:2105.3px;top:374.3px;width:34.3px;height:34.0px;border:2.5px solid #2c333b;border-radius:7px;box-sizing:border-box;"></div>
<svg class="r" style="left:2105px;top:374px;" width="34" height="34" viewBox="0 0 34 34"><path d="M10 18 L15 22.5 L24 13" fill="none" stroke="#4cc38a" stroke-width="3" stroke-linecap="round" stroke-linejoin="round"/></svg>
<div class="t " style="left:2160.3px;top:378.4px;font-size:26px;color:#545a61;font-weight:400;transform:scaleX(0.9707);transform-origin:0 0;-webkit-text-stroke:0.45px #545a61;">skywalker-adcm-rc-dr-2</div>
<div class="r" style="left:2105.3px;top:429.4px;width:34.3px;height:34.0px;border:2.5px solid #2c333b;border-radius:7px;box-sizing:border-box;"></div>
<svg class="r" style="left:2105px;top:429px;" width="34" height="34" viewBox="0 0 34 34"><path d="M10 18 L15 22.5 L24 13" fill="none" stroke="#4cc38a" stroke-width="3" stroke-linecap="round" stroke-linejoin="round"/></svg>
<div class="t " style="left:2160.3px;top:433.4px;font-size:26px;color:#545a61;font-weight:400;transform:scaleX(0.9707);transform-origin:0 0;-webkit-text-stroke:0.45px #545a61;">skywalker-adcm-rc-dr-1</div>
<div class="r" style="left:2105.3px;top:484.4px;width:34.3px;height:34.0px;border:2.5px solid #2c333b;border-radius:7px;box-sizing:border-box;"></div>
<svg class="r" style="left:2105px;top:484px;" width="34" height="34" viewBox="0 0 34 34"><path d="M10 18 L15 22.5 L24 13" fill="none" stroke="#4cc38a" stroke-width="3" stroke-linecap="round" stroke-linejoin="round"/></svg>
<div class="t " style="left:2160.3px;top:488.5px;font-size:26px;color:#545a61;font-weight:400;transform:scaleX(0.9703);transform-origin:0 0;-webkit-text-stroke:0.45px #545a61;">skywalker-adcm-rc-dr-3</div>
<div class="r" style="left:0.0px;top:1466.0px;width:2474.0px;height:78.0px;background:linear-gradient(to bottom, rgba(200,203,208,0) 0%, rgba(200,203,208,0.06) 45%, rgba(190,193,198,0.18) 80%, rgba(185,188,194,0.33) 100%);"></div>
</body></html>
